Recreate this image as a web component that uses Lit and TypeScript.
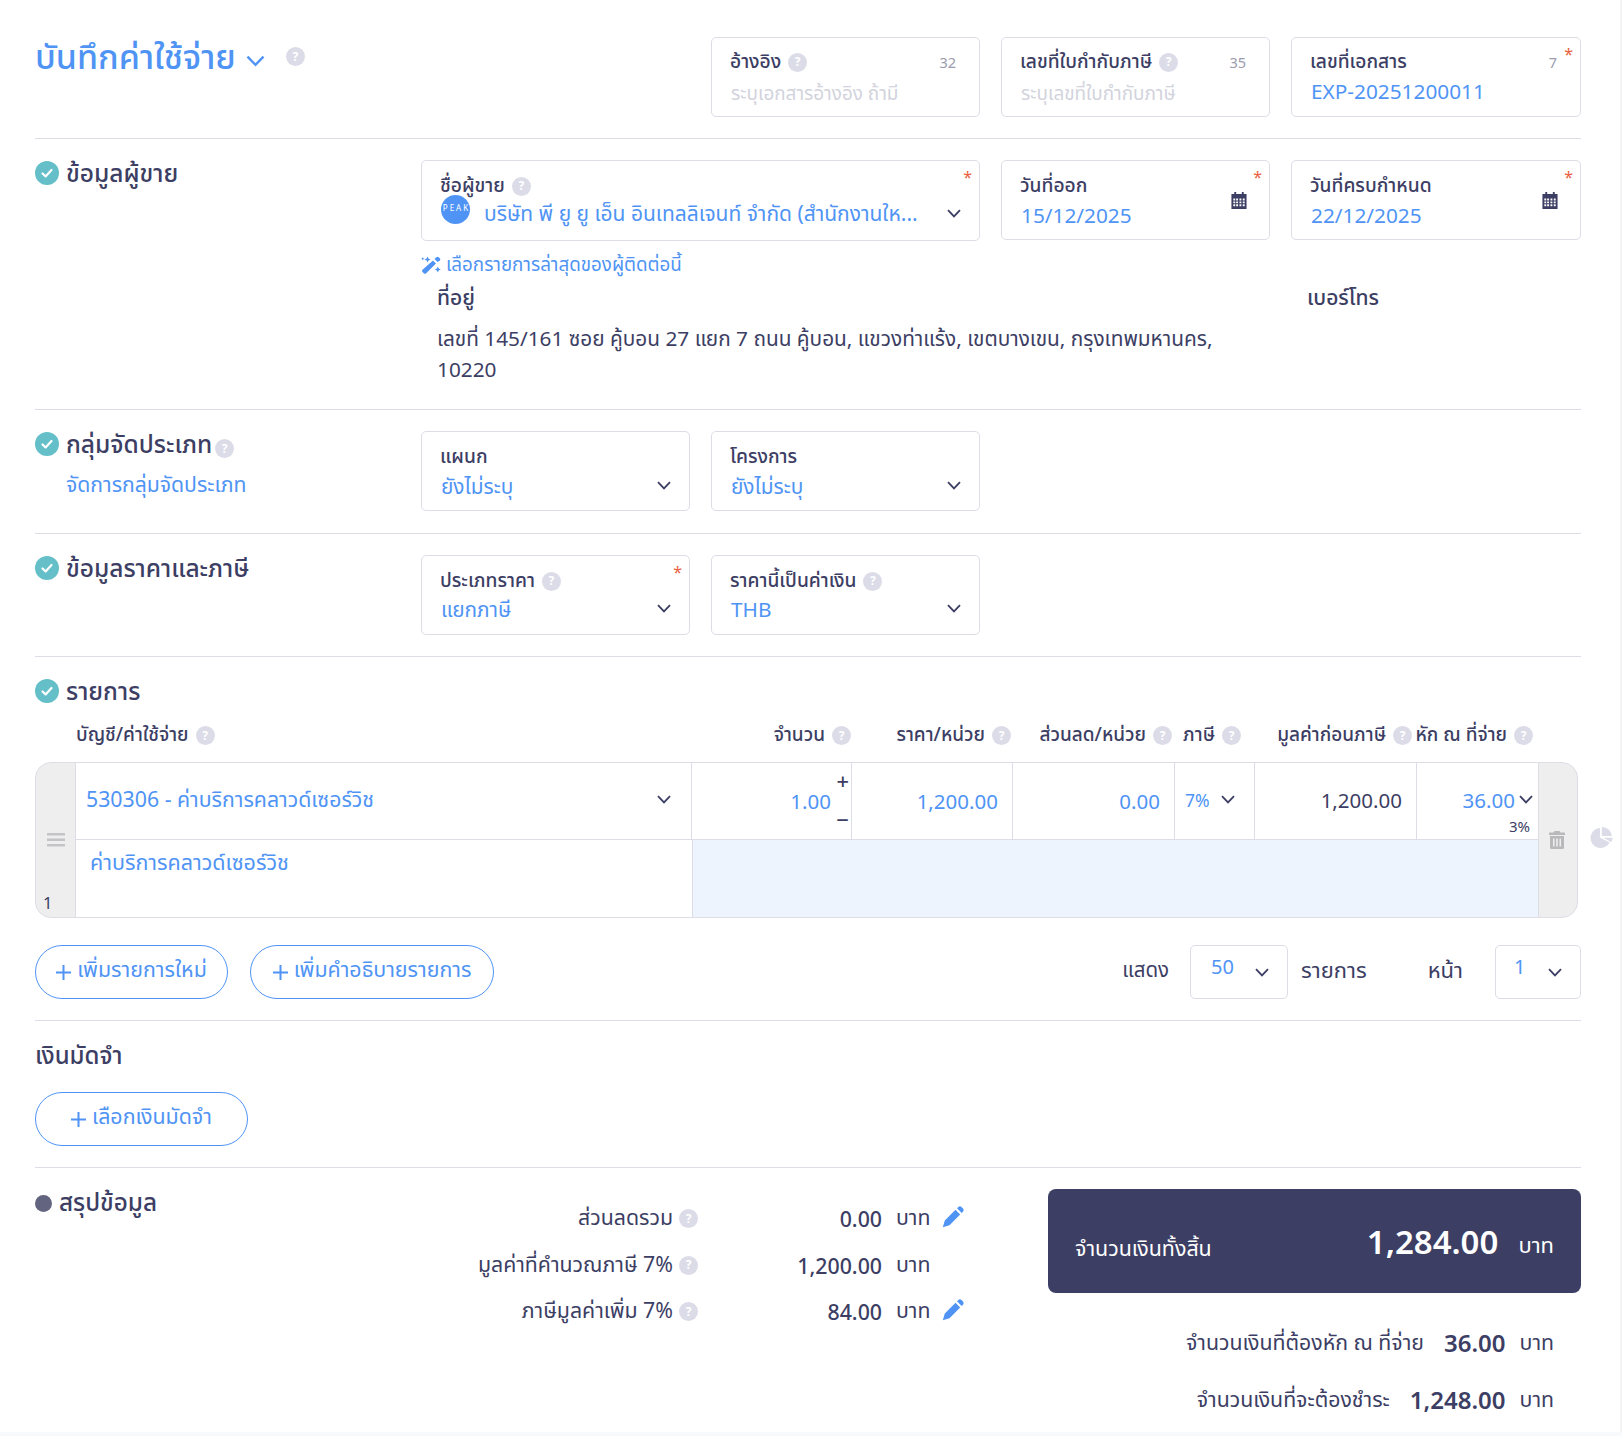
import { LitElement, html, css } from "lit";
import { customElement } from "lit/decorators.js";

const chev = (c = "") => html`<svg class="chev ${c}" viewBox="0 0 14 9" width="14" height="9"><path d="M1 1.2 L7 7.4 L13 1.2" fill="none" stroke="currentColor" stroke-width="1.8"/></svg>`;
const help = (c = "") => html`<span class="help ${c}">?</span>`;
const check = html`<svg class="check" viewBox="0 0 24 24" width="24" height="24"><circle cx="12" cy="12" r="12" fill="#64bfc9"/><path d="M7.5 12.5 L10.6 15.4 L16.5 9" fill="none" stroke="#fff" stroke-width="2.2" stroke-linecap="round" stroke-linejoin="round"/></svg>`;
const cal = html`<svg class="cal" viewBox="0 0 16 18" width="16" height="17"><path d="M3 0h2v2H3zM11 0h2v2h-2z" fill="#3c3e64"/><path fill-rule="evenodd" d="M0 2h16v16H0zM2 7v2h2V7zM5 7v2h2V7zM8.500 7v2h2V7zM12 7v2h2V7zM2 10v2h2v-2zM5 10v2h2v-2zM8.500 10v2h2v-2zM12 10v2h2v-2zM2 13v2h2v-2zM5 13v2h2v-2zM8.500 13v2h2v-2zM12 13v2h2v-2z" fill="#3c3e64"/></svg>`;
const pencil = html`<svg class="pencil" viewBox="0 0 22 22" width="22" height="22"><path d="M0.800 21.200 L2.800 14.500 L13.500 3.800 L18.200 8.500 L7.500 19.200 Z M15 2.300 L16.300 1 Q18 -0.300 19.500 1 L21 2.500 Q22.300 4 21 5.700 L19.700 7 Z" fill="#4f94f5"/></svg>`;

interface F { label: string; help?: boolean; value?: string; ph?: string; count?: string; req?: boolean; chev?: boolean; cal?: boolean; cls?: string; logo?: boolean; }

const field = (f: F) => html`<div class="field ${f.cls ?? ""}">
  ${f.req ? html`<span class="req">*</span>` : ""}
  <div class="flabel"><span>${f.label}</span>${f.help ? help() : ""}${f.count ? html`<span class="count">${f.count}</span>` : ""}</div>
  <div class="fvalue ${f.ph ? "ph" : ""}">
    ${f.logo ? html`<span class="logo">PEAK</span>` : ""}
    <span class="vtext">${f.ph ?? f.value}</span>
    ${f.chev ? chev() : ""}
  </div>
  ${f.cal ? cal : ""}
</div>`;

@customElement("app-root")
export class AppRoot extends LitElement {
  static styles = css`
    :host { display: block; width: 1622px; height: 1436px; box-sizing: border-box; background: #fff; overflow: hidden; position: relative;
      font-family: "Noto Sans", "Noto Sans Thai", "Noto Sans CJK SC", sans-serif; color: #3c3e64; font-size: 19px; }
    .wrap { margin-left: 35px; width: 1546px; }
    .grid { display: grid; grid-template-columns: 386px repeat(4, 290px); }
    .sec { border-bottom: 1px solid #dddde8; padding-top: 21px; box-sizing: border-box; }
    .head { padding-top: 37px; height: 139px; }
    .h-sec1 { height: 271px; }
    .h-sec2 { height: 124px; }
    .h-sec3 { height: 123px; }
    .title { font-size: 34px; font-weight: 500; color: #4f94f5; display: flex; align-items: center; gap: 9px; height: 42px; white-space: nowrap; }
    .title .chev { width: 21px; height: 12px; margin-top: 6px; color: #4f94f5; }
    .title .help { margin-left: 11px; margin-top: -3px; }
    .span2 { grid-column: 1 / 3; }
    .c23 { grid-column: 2 / 4; }
    .field { position: relative; box-sizing: border-box; height: 80px; border: 1px solid #dddde8; border-radius: 5px; margin-right: 21px; padding: 12px 18px 0 18px; }
    .head .field { padding-top: 11px; }
    .field.last { margin-right: 0; }
    .field.tall { height: 81px; }
    .flabel { display: flex; align-items: center; gap: 7px; height: 26px; font-size: 19.200px; font-weight: 500; white-space: nowrap; }
    .fvalue { display: flex; align-items: center; height: 31px; margin-top: 1px; font-size: 20.800px; color: #4f94f5; white-space: nowrap; }
    .fvalue.ph { color: #d2d3dd; font-size: 18.900px; padding-top: 2px; }
    .h-sec3 .fvalue { margin-top: 0; }
    .vtext { flex: 1; min-width: 0; padding-left: 1px; line-height: 31px; }
    .c23 .fvalue { margin-top: -1px; font-size: 21px; }
    .c23 .fvalue .chev { margin-left: auto; margin-top: 0; }
    .c23 .vtext { flex: none; }
    .count { margin-left: auto; font-size: 14.500px; font-weight: 400; color: #9b9cae; padding-right: 5px; }
    .req { position: absolute; right: 7px; top: 6px; color: #e8603c; font-size: 16px; line-height: 20px; }
    .help { display: inline-flex; align-items: center; justify-content: center; width: 19px; height: 19px; border-radius: 50%; background: #dcdce8; color: #fff; font-size: 12px; font-weight: 700; flex: none; line-height: 1; font-family: "Noto Sans", sans-serif; }
    .chev { color: #3c3e64; flex: none; }
    .fvalue .chev { margin-left: 14px; margin-top: -3px; }
    .cal { position: absolute; right: 22px; top: 31px; }
    .logo { width: 29px; height: 29px; border-radius: 50%; background: #4f94f5; color: #fff; font-size: 8px; letter-spacing: 2px; text-indent: 2px; display: flex; align-items: center; justify-content: center; flex: none; margin: -8px 13px 0 1px; padding-bottom: 4px; box-sizing: border-box; overflow: hidden; font-weight: 400; }
    .sec-title { display: flex; align-items: center; gap: 7px; font-size: 24.500px; font-weight: 500; height: 26px; white-space: nowrap; padding-top: 2px; box-sizing: border-box; }
    .check { margin-top: -2px; flex: none; }
    .sec-title .help { margin-left: -4px; margin-top: 7px; }
    .manage { margin: 13px 0 0 31px; color: #4f94f5; font-size: 21.200px; line-height: 28px; white-space: nowrap; }
    .wand { display: flex; align-items: center; gap: 5px; color: #4f94f5; font-size: 18.800px; height: 24px; margin: 12px 0 0 386px; white-space: nowrap; }
    .addr { margin: 5px 0 0 402px; display: grid; grid-template-columns: 870px auto; }
    .addr h4 { margin: 0; font-size: 21px; font-weight: 500; line-height: 30px; }
    .addr p { margin: 11px 0 0; width: 790px; font-size: 20.800px; line-height: 31px; }
    .items { height: 364px; padding-top: 21px; }
    .thead { display: grid; grid-template-columns: 41px 616px 160px 161px 162px 80px 162px 121px; height: 26px; margin-top: 17px; font-size: 19px; font-weight: 500; align-items: center; white-space: nowrap; }
    .th { display: flex; align-items: center; gap: 7px; justify-content: flex-end; }
    .th.first { justify-content: flex-start; }
    .th.a { padding-right: 1px; } .th.b { padding-right: 2px; } .th.c { padding-right: 3px; }
    .th.d { padding-right: 14px; } .th.e { padding-right: 5px; } .th.f { padding-right: 5px; }
    .table { display: grid; grid-template-columns: 41px 616px 160px 161px 162px 80px 162px 121px 40px; grid-template-rows: 77px 79px; margin-top: 15px; height: 156px; width: 1543px; }
    .gut { grid-row: 1 / 3; background: #eeeeee; border: 1px solid #dddde8; box-sizing: border-box; position: relative; display: flex; align-items: center; justify-content: center; }
    .gut.gl { grid-column: 1; border-radius: 16px 0 0 16px; }
    .gut.gr { grid-column: 9; border-radius: 0 16px 16px 0; }
    .gut.gr svg { margin-right: 2px; }
    .rownum { position: absolute; left: 7px; bottom: 3px; font-size: 16.500px; }
    .cell { grid-row: 1; border-top: 1px solid #dddde8; border-right: 1px solid #dddde8; position: relative; display: flex; align-items: center; justify-content: flex-end; padding-right: 14px; box-sizing: border-box; color: #4f94f5; font-size: 20.500px; white-space: nowrap; }
    .cell.acct { justify-content: space-between; padding: 0 20px 1px 10px; font-size: 21.300px; }
    .cell.acct .chev { margin-top: -3px; }
    .cell.dark { color: #3c3e64; padding-bottom: 3px; }
    .cell.tax { justify-content: flex-start; padding: 0 17px 3px 10px; font-size: 17.500px; gap: 11px; }
    .cell.wht { padding-right: 5px; padding-bottom: 3px; gap: 4px; border-right: none; }
    .pct { position: absolute; right: 8px; bottom: 3px; color: #3c3e64; font-size: 15px; }
    .pm { position: absolute; right: 2px; color: #3c3e64; font-size: 22px; line-height: 18px; font-weight: 500; }
    .pm.p { top: 8px; } .pm.m { bottom: 11px; }
    .qty { padding-right: 20px; }
    .desc { grid-column: 2; grid-row: 2; border-top: 1px solid #dddde8; border-bottom: 1px solid #dddde8; padding: 8px 0 0 14px; color: #4f94f5; font-size: 21.500px; box-sizing: border-box; line-height: 28px; white-space: nowrap; }
    .blue { grid-column: 3 / 9; grid-row: 2; background: #edf4fd; border: 1px solid #dddde8; border-right: none; box-sizing: border-box; }
    .pie { position: absolute; left: 1590px; top: 827px; }
    .tools { display: flex; align-items: center; margin-top: 27px; height: 54px; }
    .btn { box-sizing: border-box; height: 54px; border: 1px solid #4f94f5; border-radius: 27px; color: #4f94f5; display: inline-flex; align-items: center; justify-content: center; gap: 6px; font-size: 21.400px; white-space: nowrap; background: #fff; font-family: inherit; padding: 0 0 4px; }
    .plus { width: 15px; height: 15px; margin-top: 4px; }
    .b1 { width: 193px; } .b2 { width: 244px; margin-left: 22px; } .b3 { width: 213px; }
    .pager { margin-left: auto; display: flex; align-items: center; font-size: 22px; white-space: nowrap; line-height: 30px; }
    .pager > span { padding-bottom: 6px; }
    .pager > .sd { font-size: 20.500px; }
    .sel { box-sizing: border-box; height: 54px; border: 1px solid #dddde8; border-radius: 5px; display: flex; align-items: center; color: #4f94f5; font-size: 20px; }
    .sel span { padding-bottom: 10px; }
    .sel .chev { margin-left: auto; }
    .s50 { width: 98px; margin: 0 13px 0 21px; padding: 0 18px 0 20px; }
    .s1 { width: 86px; margin-left: 32px; padding: 0 18px; }
    .gap { margin-left: 61px; }
    .deposit { height: 147px; padding-top: 20px; }
    .deposit h3 { margin: 0 0 23px; font-size: 24px; font-weight: 500; line-height: 28px; }
    .summary { display: grid; grid-template-columns: 386px 627px 533px; padding-top: 21px; }
    .dot { width: 17px; height: 17px; border-radius: 50%; background: #63647f; display: inline-block; flex: none; }
    .sum-title { display: flex; align-items: center; gap: 7px; font-size: 24.300px; font-weight: 500; height: 28px; white-space: nowrap; }
    .rows { padding-top: 6.500px; display: flex; flex-direction: column; }
    .r { display: grid; grid-template-columns: 276px 185px 50px auto; height: 46.500px; align-items: center; font-size: 21.300px; white-space: nowrap; }
    .r .lab { display: flex; justify-content: flex-end; align-items: center; gap: 6px; }
    .r .help { margin-right: -1px; }
    .r .val { text-align: right; font-weight: 500; }
    .r .unit { padding-left: 14px; box-sizing: border-box; }
    .r .pencil { margin-left: 10px; margin-top: -3px; }
    .card { background: #3c3e64; color: #fff; border-radius: 8px; height: 104px; display: flex; align-items: center; padding: 0 27px; box-sizing: border-box; white-space: nowrap; }
    .card .cl { font-size: 21.400px; margin-top: 16px; }
    .card .cv { margin-left: auto; font-size: 33px; font-weight: 600; }
    .card .cu { margin-left: 20px; font-size: 22px; margin-top: 10px; }
    .line { display: flex; justify-content: flex-end; align-items: center; height: 57px; padding-right: 27px; font-size: 21.300px; white-space: nowrap; }
    .lines { padding-top: 22px; }
    .line b { font-weight: 600; font-size: 24px; margin: -2px 14px 0 20px; }
    .rail-r { position: absolute; right: 0; top: 0; bottom: 0; width: 2px; background: #f4f4f6; }
    .rail-b { position: absolute; left: 0; right: 0; bottom: 0; height: 4px; background: #f8f9fb; }
  `;

  render() {
    const plus = html`<svg class="plus" viewBox="0 0 15 15"><path d="M7.500 0v15M0 7.500h15" stroke="#4f94f5" stroke-width="2"/></svg>`;
    const wand = html`<svg viewBox="0 0 20 18" width="20" height="18"><path d="M12 4.500 L15 7.500 L5.200 17.300 Q4 18.300 2.800 17.300 L1.500 16 Q0.500 14.800 1.500 13.800 Z M13.500 3 L15.300 1.200 Q16.500 0.200 17.700 1.200 L18.800 2.300 Q19.800 3.500 18.800 4.700 L16.500 6 Z" fill="#4f94f5"/><path d="M6.500 0.500 L7.400 2.600 L9.500 3.500 L7.400 4.400 L6.500 6.500 L5.600 4.400 L3.500 3.500 L5.600 2.600Z M1.800 1 L2.300 2.200 L3.500 2.700 L2.300 3.200 L1.800 4.400 L1.300 3.200 L0.100 2.700 L1.300 2.200Z M16.800 10.500 L17.700 12.600 L19.800 13.500 L17.700 14.400 L16.800 16.500 L15.900 14.400 L13.800 13.500 L15.900 12.600Z" fill="#4f94f5"/></svg>`;
    return html`
      <div class="wrap">
        <div class="sec head grid">
          <div class="span2"><div class="title">บันทึกค่าใช้จ่าย ${chev()} ${help()}</div></div>
          ${field({ label: "อ้างอิง", help: true, ph: "ระบุเอกสารอ้างอิง ถ้ามี", count: "32" })}
          ${field({ label: "เลขที่ใบกำกับภาษี", help: true, ph: "ระบุเลขที่ใบกำกับภาษี", count: "35" })}
          ${field({ label: "เลขที่เอกสาร", value: "EXP-20251200011", count: "7", req: true, cls: "last" })}
        </div>

        <div class="sec h-sec1">
          <div class="grid">
            <div class="sec-title">${check} ข้อมูลผู้ขาย</div>
            ${field({ label: "ชื่อผู้ขาย", help: true, value: "บริษัท พี ยู ยู เอ็น อินเทลลิเจนท์ จำกัด (สำนักงานให...", req: true, chev: true, logo: true, cls: "c23 tall" })}
            ${field({ label: "วันที่ออก", value: "15/12/2025", req: true, cal: true })}
            ${field({ label: "วันที่ครบกำหนด", value: "22/12/2025", req: true, cal: true, cls: "last" })}
          </div>
          <div class="wand">${wand} เลือกรายการล่าสุดของผู้ติดต่อนี้</div>
          <div class="addr">
            <h4>ที่อยู่</h4><h4>เบอร์โทร</h4>
            <p>เลขที่ 145/161 ซอย คู้บอน 27 แยก 7 ถนน คู้บอน, แขวงท่าแร้ง, เขตบางเขน, กรุงเทพมหานคร, 10220</p>
          </div>
        </div>

        <div class="sec h-sec2 grid">
          <div>
            <div class="sec-title">${check} กลุ่มจัดประเภท ${help()}</div>
            <div class="manage">จัดการกลุ่มจัดประเภท</div>
          </div>
          ${field({ label: "แผนก", value: "ยังไม่ระบุ", chev: true })}
          ${field({ label: "โครงการ", value: "ยังไม่ระบุ", chev: true })}
        </div>

        <div class="sec h-sec3 grid">
          <div class="sec-title">${check} ข้อมูลราคาและภาษี</div>
          ${field({ label: "ประเภทราคา", help: true, value: "แยกภาษี", req: true, chev: true })}
          ${field({ label: "ราคานี้เป็นค่าเงิน", help: true, value: "THB", chev: true })}
        </div>

        <div class="sec items">
          <div class="sec-title">${check} รายการ</div>
          <div class="thead">
            <div></div>
            <div class="th first">บัญชี/ค่าใช้จ่าย ${help()}</div>
            <div class="th a">จำนวน ${help()}</div>
            <div class="th b">ราคา/หน่วย ${help()}</div>
            <div class="th c">ส่วนลด/หน่วย ${help()}</div>
            <div class="th d">ภาษี ${help()}</div>
            <div class="th e">มูลค่าก่อนภาษี ${help()}</div>
            <div class="th f">หัก ณ ที่จ่าย ${help()}</div>
          </div>
          <div class="table">
            <div class="gut gl">
              <svg viewBox="0 0 18 14" width="18" height="14"><path d="M0 0h18v2.500H0zM0 5.500h18v2.500H0zM0 11h18v2.500H0z" fill="#c4c4c6"/></svg>
              <span class="rownum">1</span>
            </div>
            <div class="cell acct"><span>530306 - ค่าบริการคลาวด์เซอร์วิช</span>${chev()}</div>
            <div class="cell qty">1.00<span class="pm p">+</span><span class="pm m">−</span></div>
            <div class="cell">1,200.00</div>
            <div class="cell">0.00</div>
            <div class="cell tax"><span>7%</span>${chev()}</div>
            <div class="cell dark">1,200.00</div>
            <div class="cell wht">36.00 ${chev()}<span class="pct">3%</span></div>
            <div class="gut gr">
              <svg viewBox="0 0 16 18" width="16" height="18"><path d="M5.500 0h5l1 1.500H15.500Q16 1.500 16 2.500V4H0V2.500Q0 1.500 .500 1.500H4.500zM1 5h14v11.500Q15 18 13.500 18H2.500Q1 18 1 16.500zM4 7.500v8h1.500v-8zM7.200 7.500v8h1.600v-8zM10.500 7.500v8H12v-8z" fill-rule="evenodd" fill="#b9b9bc"/></svg>
            </div>
            <div class="desc">ค่าบริการคลาวด์เซอร์วิช</div>
            <div class="blue"></div>
          </div>
          <div class="tools">
            <button class="btn b1">${plus} เพิ่มรายการใหม่</button>
            <button class="btn b2">${plus} เพิ่มคำอธิบายรายการ</button>
            <div class="pager">
              <span class="sd">แสดง</span>
              <div class="sel s50"><span>50</span>${chev()}</div>
              <span>รายการ</span>
              <span class="gap">หน้า</span>
              <div class="sel s1"><span>1</span>${chev()}</div>
            </div>
          </div>
        </div>

        <div class="sec deposit">
          <h3>เงินมัดจำ</h3>
          <button class="btn b3">${plus} เลือกเงินมัดจำ</button>
        </div>

        <div class="summary">
          <div class="sum-title"><span class="dot"></span> สรุปข้อมูล</div>
          <div class="rows">
            <div class="r"><div class="lab">ส่วนลดรวม ${help()}</div><div class="val">0.00</div><div class="unit">บาท</div>${pencil}</div>
            <div class="r"><div class="lab">มูลค่าที่คำนวณภาษี 7% ${help()}</div><div class="val">1,200.00</div><div class="unit">บาท</div></div>
            <div class="r"><div class="lab">ภาษีมูลค่าเพิ่ม 7% ${help()}</div><div class="val">84.00</div><div class="unit">บาท</div>${pencil}</div>
          </div>
          <div>
            <div class="card"><span class="cl">จำนวนเงินทั้งสิ้น</span><span class="cv">1,284.00</span><span class="cu">บาท</span></div>
            <div class="lines">
              <div class="line">จำนวนเงินที่ต้องหัก ณ ที่จ่าย <b>36.00</b> บาท</div>
              <div class="line">จำนวนเงินที่จะต้องชำระ <b>1,248.00</b> บาท</div>
            </div>
          </div>
        </div>
      </div>
      <svg class="pie" viewBox="0 0 23 21" width="23" height="21"><path d="M10 1 A10 10 0 1 0 19.500 15.500 L10 10.500 Z M11.800 0 A10 10 0 0 1 22 9 L11.800 9 Z M13.500 10.800 H22.800 A11 11 0 0 1 21 15.200 Z" fill="#dcdce8"/></svg>
      <div class="rail-r"></div><div class="rail-b"></div>
    `;
  }
}
